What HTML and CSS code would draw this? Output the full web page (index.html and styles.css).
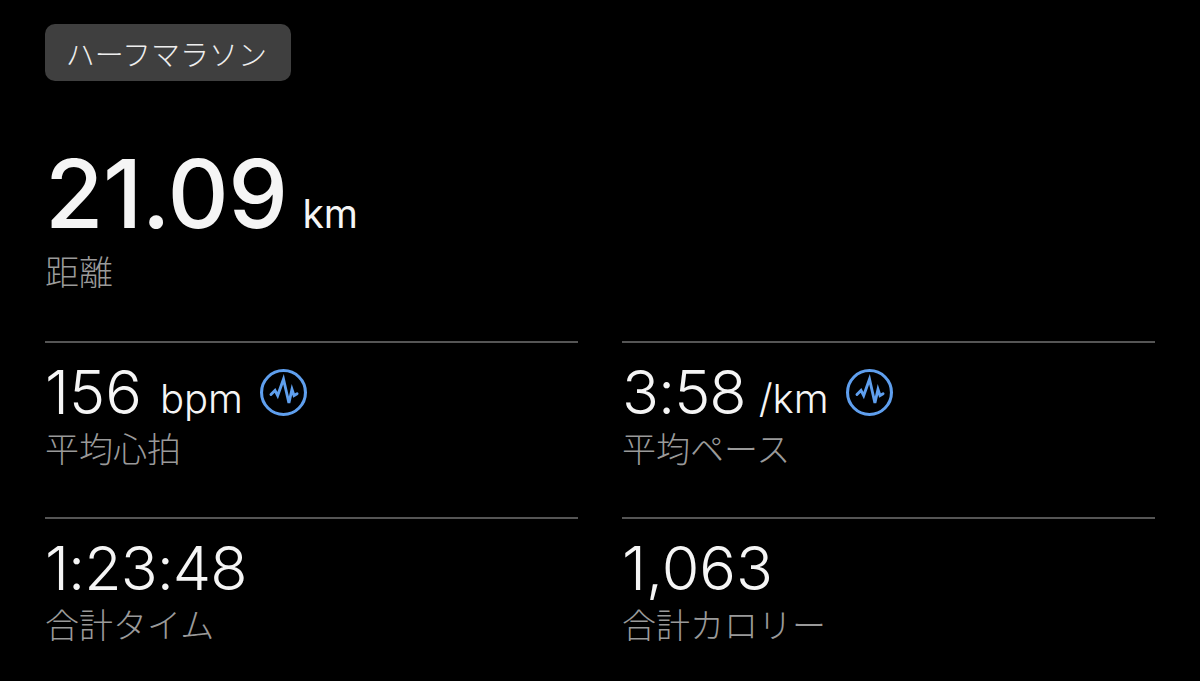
FILE: index.html
```html
<!DOCTYPE html>

<html lang="ja">
    <head>
        <meta charset="UTF-8">
        <title>ハーフマラソン</title>

        <link rel="stylesheet" href="styles.css">
    </head>

    <body>
        <div class="container">
            <div class="tag">ハーフマラソン</div>

            <div class="distance">
                <p class="distance-value">21.09<span class="distance-unit">km</span></p>
                <p class="label">距離</p>
            </div>

            <div class="stats">
                <div class="stat">
                    <p class="value">156<span class="unit">bpm</span>
                        <svg class="badge" viewBox="0 0 46 46">
                            <circle cx="23" cy="23" r="21.5" fill="none" stroke="#5f9fee" stroke-width="3"/>
                            <path d="M10.7 25L14.7 21L17.3 26L23 10L28.3 33.3L31.3 20L33.3 26L36.3 24.3" fill="none" stroke="#5f9fee" stroke-width="2.8" stroke-linejoin="miter" stroke-linecap="round"/>
                        </svg>
                    </p>
                    <p class="label">平均心拍</p>
                </div>

                <div class="stat">
                    <p class="value value-tight">3:58<span class="unit unit-slash">/km</span>
                        <svg class="badge" viewBox="0 0 46 46">
                            <circle cx="23" cy="23" r="21.5" fill="none" stroke="#5f9fee" stroke-width="3"/>
                            <path d="M10.7 25L14.7 21L17.3 26L23 10L28.3 33.3L31.3 20L33.3 26L36.3 24.3" fill="none" stroke="#5f9fee" stroke-width="2.8" stroke-linejoin="miter" stroke-linecap="round"/>
                        </svg>
                    </p>
                    <p class="label">平均ペース</p>
                </div>

                <div class="stat">
                    <p class="value value-tight">1:23:48</p>
                    <p class="label">合計タイム</p>
                </div>

                <div class="stat">
                    <p class="value">1,063</p>
                    <p class="label">合計カロリー</p>
                </div>
            </div>
        </div>
    </body>
</html>
```

FILE: styles.css
```css
* {
    margin: 0;
    padding: 0;
    box-sizing: border-box;
}

html, body {
    width: 100%;
    height: 100%;
    background-color: #000;
    overflow: hidden;
}

body {
    font-family: Inter, "Noto Sans CJK JP", sans-serif;
    color: #f5f5f5;
}

.container {
    padding: 24px 45px 0;
}

.tag {
    display: inline-flex;
    align-items: center;
    justify-content: center;
    width: 246px;
    height: 57px;
    padding-right: 3px;
    border-radius: 10px;
    background-color: #3f3f3f;
    font-family: "Noto Sans CJK JP", sans-serif;
    font-size: 29px;
    font-weight: 300;
    color: #eee;
}

.distance {
    margin-top: 78px;
    height: 182px;
}

.distance-value {
    font-size: 95px;
    font-weight: 550;
    line-height: 70px;
    letter-spacing: -0.6px;
}

.distance-unit {
    margin-left: 15px;
    font-size: 39px;
    font-weight: 400;
    letter-spacing: 0;
}

.label {
    font-family: "Noto Sans CJK JP", sans-serif;
    font-size: 34px;
    font-weight: 300;
    line-height: 44px;
    color: #9a9a9a;
}

.stats {
    display: grid;
    grid-template-columns: 533px 533px;
    column-gap: 44px;
}

.stat {
    height: 176px;
    padding-top: 15px;
    border-top: 2px solid #555;
}

.value {
    display: flex;
    align-items: center;
    height: 68px;
    font-size: 61px;
    font-weight: 300;
}

.value-tight {
    letter-spacing: -1px;
}

.unit {
    margin-left: 18px;
    font-size: 40px;
    margin-top: 12px;
    letter-spacing: 0;
}

.unit-slash {
    margin-left: 13px;
}

.badge {
    width: 47px;
    height: 47px;
    margin-left: 17px;
}
```
